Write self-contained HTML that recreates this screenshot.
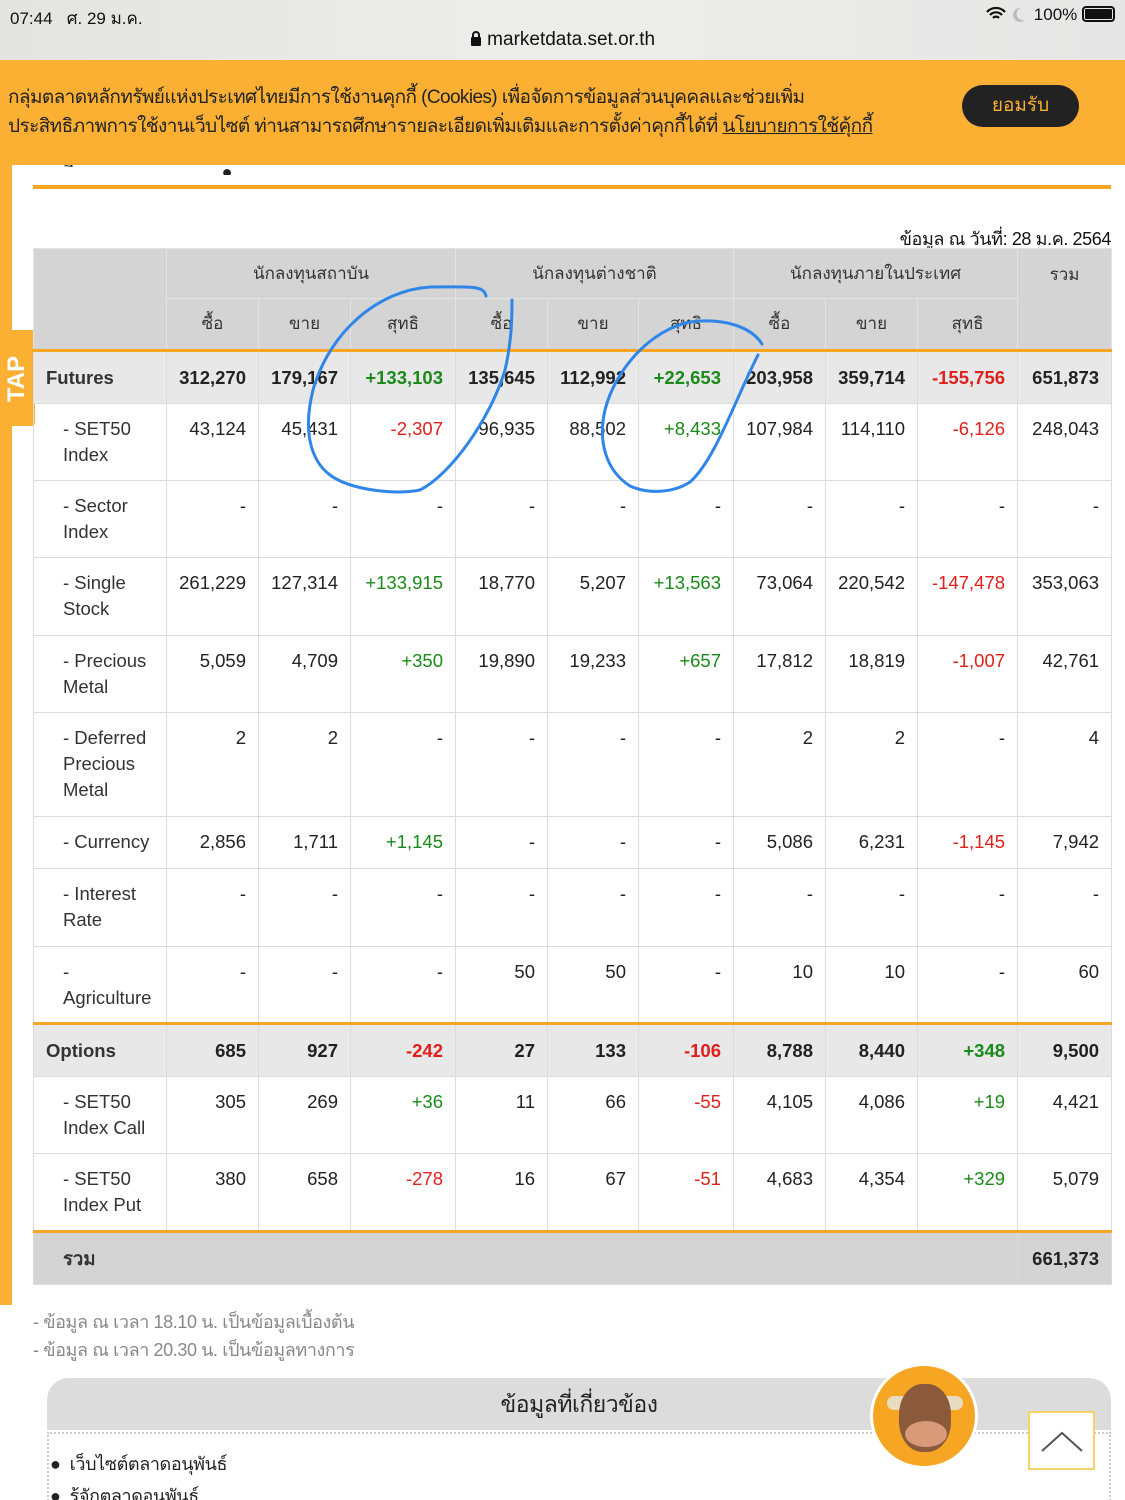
<!DOCTYPE html><html><head><meta charset="utf-8"><style>
*{margin:0;padding:0;box-sizing:border-box}
html,body{width:1125px;height:1500px;overflow:hidden}
body{background:#fff;font-family:"Liberation Sans","Noto Sans CJK SC",sans-serif;position:relative;color:#222}
.top{position:absolute;left:0;top:0;width:1125px;height:60px;background:linear-gradient(90deg,#e4e4e2,#ededeb 50%,#e6e6e6);}
.banner{position:absolute;left:0;top:60px;width:1125px;height:105px;background:#fbb034;color:#222;font-size:19px;line-height:29px;padding:23px 0 0 8px;letter-spacing:-0.6px}
.btn{position:absolute;left:962px;top:25px;width:117px;height:42px;border-radius:21px;background:#222;color:#fbb034;font-size:19px;text-align:center;line-height:42px;letter-spacing:0}
table{position:absolute;left:33px;top:248px;border-collapse:collapse;table-layout:fixed;width:1078px;font-size:18.5px}
td{border:1px solid #dcdcdc;text-align:right;padding:12px 12px 0 6px;vertical-align:top;line-height:26px}
td.l{text-align:left;padding-left:29px;color:#333}
tr.h td{background:#d4d4d4;text-align:center;vertical-align:middle;padding:0;border-color:#e2e2e2;font-size:17px;color:#333}
tr.f td{background:#e8e8e8;font-weight:bold;vertical-align:middle;padding-top:0}
tr.f td.l{padding-left:12px}
.g{color:#1a8a1a}.r{color:#e0201c}
.ob td{border-top:3px solid #f6a623}
</style></head><body>
<div class="top">
<div style="position:absolute;left:10px;top:5px;font-size:17px;color:#111">07:44&nbsp;&nbsp;&nbsp;ศ. 29 ม.ค.</div>
<div style="position:absolute;right:10px;top:5px;font-size:17px;color:#111"><svg width="44" height="16" style="vertical-align:-2px"><path d="M2,6 A12,12 0 0 1 20,6 M5,9 A8,8 0 0 1 17,9 M8,12 A4,4 0 0 1 14,12" fill="none" stroke="#111" stroke-width="2.2"/><path d="M36,2 A7,7 0 1 0 40,14 A6,6 0 0 1 36,2Z" fill="#bbb"/></svg> 100% <span style="display:inline-block;width:33px;height:16px;border:2px solid #111;border-radius:4px;vertical-align:-2px;background:#111;box-shadow:inset 0 0 0 1px #e6e6e6"></span></div>
<div style="position:absolute;left:0;width:1125px;top:29px;text-align:center;font-size:19px;color:#111"><svg width="12" height="15" style="vertical-align:-1px"><rect x="1" y="6" width="10" height="9" rx="1" fill="#111"/><path d="M3,7 V4 A3,3 0 0 1 9,4 V7" fill="none" stroke="#111" stroke-width="2"/></svg> marketdata.set.or.th</div>
</div>
<div style="position:absolute;left:0;top:165px;width:12px;height:1140px;background:#fbb034"></div>
<div style="position:absolute;left:0;top:330px;width:35px;height:96px;background:#fbb034;border-radius:0 3px 3px 0"><div style="position:absolute;left:-14px;top:35px;transform:rotate(-90deg);color:#fff;font-weight:bold;font-size:24px;width:62px;text-align:center">TAP</div></div>
<div style="position:absolute;left:60px;top:165px;width:620px;height:10px;overflow:hidden"><div style="margin-top:-8px;font-size:18px;letter-spacing:8px;color:#222">ุ ี ่ ่ ่ ่ ่ ุ ุ ุ ่ ●</div></div>
<div style="position:absolute;left:33px;top:185px;width:1078px;height:4px;background:#f6a623"></div>
<div style="position:absolute;right:14px;top:224px;font-size:18px;color:#111;letter-spacing:-0.4px">ข้อมูล ณ วันที่: 28 ม.ค. 2564</div>
<div class="banner">กลุ่มตลาดหลักทรัพย์แห่งประเทศไทยมีการใช้งานคุกกี้ (Cookies) เพื่อจัดการข้อมูลส่วนบุคคลและช่วยเพิ่ม<br>ประสิทธิภาพการใช้งานเว็บไซต์ ท่านสามารถศึกษารายละเอียดเพิ่มเติมและการตั้งค่าคุกกี้ได้ที่ <u>นโยบายการใช้คุ้กกี้</u><div class="btn">ยอมรับ</div></div>
<table>
<colgroup><col style="width:133px"><col style="width:92px"><col style="width:92px"><col style="width:105px"><col style="width:92px"><col style="width:91px"><col style="width:95px"><col style="width:92px"><col style="width:92px"><col style="width:100px"><col style="width:94px"></colgroup>
<tr class="h" style="height:50px"><td rowspan="2"></td><td colspan="3">นักลงทุนสถาบัน</td><td colspan="3">นักลงทุนต่างชาติ</td><td colspan="3">นักลงทุนภายในประเทศ</td><td rowspan="2" style="vertical-align:top;padding-top:13px">รวม</td></tr>
<tr class="h" style="height:52px"><td>ซื้อ</td><td>ขาย</td><td>สุทธิ</td><td>ซื้อ</td><td>ขาย</td><td>สุทธิ</td><td>ซื้อ</td><td>ขาย</td><td>สุทธิ</td></tr>
<tr class="f ob" style="height:53px"><td class="l">Futures</td><td>312,270</td><td>179,167</td><td class="g">+133,103</td><td>135,645</td><td>112,992</td><td class="g">+22,653</td><td>203,958</td><td>359,714</td><td class="r">-155,756</td><td>651,873</td></tr>
<tr style="height:77px"><td class="l">- SET50 Index</td><td>43,124</td><td>45,431</td><td class="r">-2,307</td><td>96,935</td><td>88,502</td><td class="g">+8,433</td><td>107,984</td><td>114,110</td><td class="r">-6,126</td><td>248,043</td></tr>
<tr style="height:77px"><td class="l">- Sector Index</td><td>-</td><td>-</td><td>-</td><td>-</td><td>-</td><td>-</td><td>-</td><td>-</td><td>-</td><td>-</td></tr>
<tr style="height:78px"><td class="l">- Single Stock</td><td>261,229</td><td>127,314</td><td class="g">+133,915</td><td>18,770</td><td>5,207</td><td class="g">+13,563</td><td>73,064</td><td>220,542</td><td class="r">-147,478</td><td>353,063</td></tr>
<tr style="height:77px"><td class="l">- Precious Metal</td><td>5,059</td><td>4,709</td><td class="g">+350</td><td>19,890</td><td>19,233</td><td class="g">+657</td><td>17,812</td><td>18,819</td><td class="r">-1,007</td><td>42,761</td></tr>
<tr style="height:104px"><td class="l">- Deferred Precious Metal</td><td>2</td><td>2</td><td>-</td><td>-</td><td>-</td><td>-</td><td>2</td><td>2</td><td>-</td><td>4</td></tr>
<tr style="height:52px"><td class="l">- Currency</td><td>2,856</td><td>1,711</td><td class="g">+1,145</td><td>-</td><td>-</td><td>-</td><td>5,086</td><td>6,231</td><td class="r">-1,145</td><td>7,942</td></tr>
<tr style="height:78px"><td class="l">- Interest Rate</td><td>-</td><td>-</td><td>-</td><td>-</td><td>-</td><td>-</td><td>-</td><td>-</td><td>-</td><td>-</td></tr>
<tr style="height:77px"><td class="l">-<br>Agriculture</td><td>-</td><td>-</td><td>-</td><td>50</td><td>50</td><td>-</td><td>10</td><td>10</td><td>-</td><td>60</td></tr>
<tr class="f ob" style="height:53px"><td class="l">Options</td><td>685</td><td>927</td><td class="r">-242</td><td>27</td><td>133</td><td class="r">-106</td><td>8,788</td><td>8,440</td><td class="g">+348</td><td>9,500</td></tr>
<tr style="height:77px"><td class="l">- SET50 Index Call</td><td>305</td><td>269</td><td class="g">+36</td><td>11</td><td>66</td><td class="r">-55</td><td>4,105</td><td>4,086</td><td class="g">+19</td><td>4,421</td></tr>
<tr style="height:78px"><td class="l">- SET50 Index Put</td><td>380</td><td>658</td><td class="r">-278</td><td>16</td><td>67</td><td class="r">-51</td><td>4,683</td><td>4,354</td><td class="g">+329</td><td>5,079</td></tr>
<tr class="f ob" style="height:53px"><td class="l" colspan="10" style="background:#d4d4d4;padding-left:29px">รวม</td><td style="background:#d4d4d4">661,373</td></tr>
</table>
<svg style="position:absolute;left:0;top:0" width="1125" height="1500"><g fill="none" stroke="#2f86e8" stroke-width="3" stroke-linecap="round">
<path d="M486,296 C484,285 470,287 430,287 C380,290 330,330 313,390 C303,430 310,460 330,475 C350,490 395,495 420,490 C450,475 490,420 505,370 C512,340 512,315 512,300"/>
<path d="M762,344 C750,325 720,318 690,322 C650,330 615,370 605,410 C598,440 605,470 630,486 C650,495 675,492 690,482 C715,460 735,400 758,355"/>
</g></svg>
<div style="position:absolute;left:33px;top:1308px;font-size:18px;color:#888;line-height:28px;letter-spacing:-0.4px">- ข้อมูล ณ เวลา 18.10 น. เป็นข้อมูลเบื้องต้น<br>- ข้อมูล ณ เวลา 20.30 น. เป็นข้อมูลทางการ</div>
<div style="position:absolute;left:47px;top:1378px;width:1064px;height:52px;background:#dcdcdc;border-radius:22px 22px 0 0;text-align:center;font-size:23px;line-height:52px;color:#222;letter-spacing:-0.5px">ข้อมูลที่เกี่ยวข้อง</div>
<div style="position:absolute;left:47px;top:1432px;width:1064px;height:80px;border:2px dotted #ccc;border-bottom:none"></div>
<div style="position:absolute;left:50px;top:1448px;font-size:18px;line-height:32px;color:#222;letter-spacing:-0.4px">●&nbsp;&nbsp;เว็บไซต์ตลาดอนุพันธ์<br>●&nbsp;&nbsp;รู้จักตลาดอนุพันธ์</div>
<div style="position:absolute;left:870px;top:1363px;width:108px;height:106px;border-radius:50%;background:#f6a623;border:3px solid #fff"><div style="position:absolute;left:14px;top:30px;width:76px;height:14px;border-radius:7px;background:#e8dcc0"></div><div style="position:absolute;left:26px;top:18px;width:52px;height:68px;border-radius:45%;background:#8a5a3a"></div><div style="position:absolute;left:32px;top:55px;width:42px;height:26px;border-radius:50%;background:#d99a7a"></div></div>
<div style="position:absolute;left:1028px;top:1411px;width:67px;height:59px;border:2px solid #f6d36a;background:#fff"><svg width="63" height="55"><path d="M12,38 L32,20 L52,38" fill="none" stroke="#555" stroke-width="2"/></svg></div>
</body></html>
